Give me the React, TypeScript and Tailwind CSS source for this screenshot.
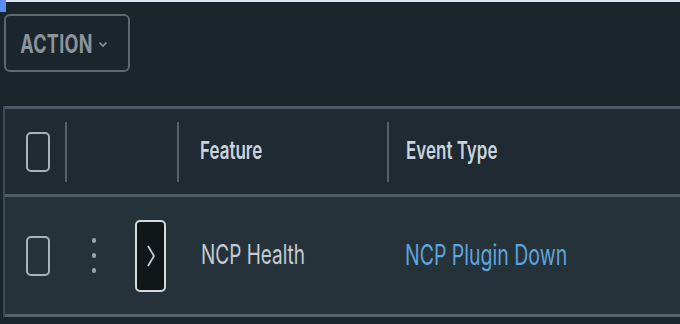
// Alarms grid: action bar plus a one-row data table
const font = { fontFamily: 'Inter, "Noto Sans", sans-serif' };

function Checkbox() {
  return <div className="h-[40px] w-[24px] rounded-[5px] border-2 border-[#aab3ba]" />;
}

function Sep() {
  return <div className="h-[60px] w-[2px] bg-[#56626b]" />;
}

export default function App() {
  return (
    <div className="relative h-[324px] w-[680px] overflow-hidden bg-[#1b252c]" style={font}>
      {/* top edge of the page */}
      <div className="flex h-[12px] items-start">
        <div className="h-[12px] w-[6px] bg-[#5b8ff0]" />
        <div className="h-[2px] flex-1 bg-[#dde6f2]" />
      </div>

      <div className="pl-[4px] pt-[2px]">
        <button className="flex h-[58px] w-[126px] items-center justify-center gap-[5px] rounded-[6px] border-2 border-[#5e686f] pr-[6px] text-[#8b949a]">
          <span className="scale-y-[1.4] text-[18px] font-bold tracking-[0.3px]">ACTION</span>
          <svg width="10" height="8" viewBox="0 0 10 8" className="mt-[2px]">
            <path d="M1.5 2.5 L5 6 L8.5 2.5" fill="none" stroke="#8b949a" strokeWidth="1.6" />
          </svg>
        </button>
      </div>

      {/* table */}
      <div className="ml-[3px] mt-[34px] border-l-2 border-[#3f4b54]">
        {/* header */}
        <div className="flex h-[91px] items-center border-y-[3px] border-[#4d5a63] bg-[#1f2a33]">
          <div className="flex w-[60px] justify-center pl-[5px]">
            <Checkbox />
          </div>
          <Sep />
          <div className="w-[110px]" />
          <Sep />
          <div className="w-[208px] pl-[21px] text-[#c9d3dc]">
            <span className="inline-block scale-y-[1.45] text-[17px] font-semibold">Feature</span>
          </div>
          <Sep />
          <div className="flex-1 pl-[17px] text-[#c9d3dc]">
            <span className="inline-block scale-y-[1.45] text-[17px] font-semibold">Event Type</span>
          </div>
        </div>

        {/* row */}
        <div className="flex h-[120px] items-center border-b-[3px] border-[#55626b] bg-[#26323a]">
          <div className="flex w-[60px] justify-center pl-[5px]">
            <Checkbox />
          </div>
          <div className="flex w-[51px] flex-col items-center gap-[10px] pl-[7px]">
            <span className="h-[5px] w-[4px] rounded-full bg-[#9aa3aa]" />
            <span className="h-[5px] w-[4px] rounded-full bg-[#9aa3aa]" />
            <span className="h-[5px] w-[4px] rounded-full bg-[#9aa3aa]" />
          </div>
          <div className="w-[64px] pl-[19px]">
            <div className="flex h-[72px] w-[31px] items-center justify-center rounded-[5px] border-2 border-[#d4d9dc] bg-[#111619]">
              <svg width="10" height="22" viewBox="0 0 10 22">
                <path d="M2 1 L8 11 L2 21" fill="none" stroke="#c7ced3" strokeWidth="1.8" />
              </svg>
            </div>
          </div>
          <div className="w-[208px] pl-[21px] text-[#c3ccd2]">
            <span className="inline-block scale-y-[1.45] text-[19px]">NCP Health</span>
          </div>
          <div className="flex-1 pl-[17px] text-[#5ea4dc]">
            <span className="inline-block scale-y-[1.45] text-[19.5px]">NCP Plugin Down</span>
          </div>
        </div>
      </div>
    </div>
  );
}
